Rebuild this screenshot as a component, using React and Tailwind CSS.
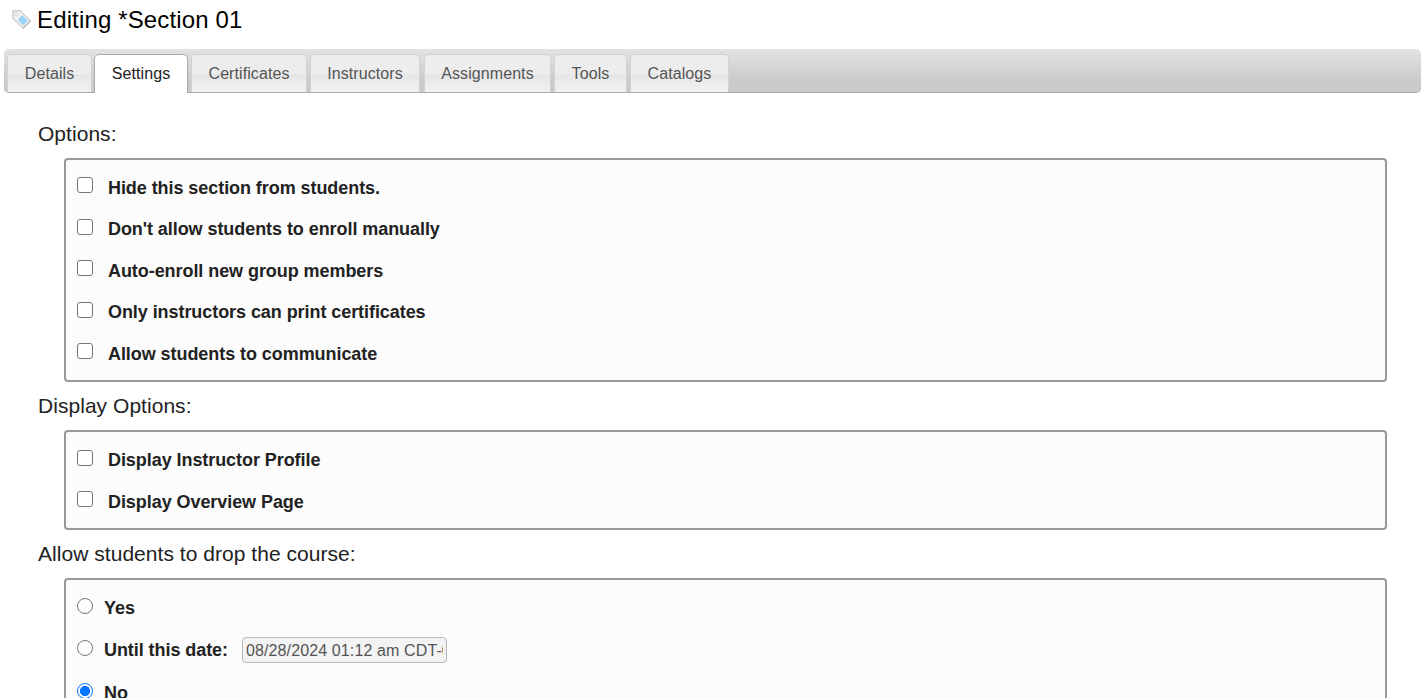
import React, { useState } from "react";

const tabs = [
  { label: "Details", box: "w-[85px] mr-[2px]" },
  { label: "Settings", box: "w-[94px] mr-[3px]" },
  { label: "Certificates", box: "w-[116px] mr-[3px]" },
  { label: "Instructors", box: "w-[110px] mr-[4px]" },
  { label: "Assignments", box: "w-[127px] mr-[3px]" },
  { label: "Tools", box: "w-[73px] mr-[3px]" },
  { label: "Catalogs", box: "w-[99px]" },
];

const control =
  "m-0 size-[16px] shrink-0 appearance-none border border-[#767676] bg-white";

function TagIcon() {
  return (
    <svg className="size-5 shrink-0" viewBox="0 0 20 20" fill="none">
      <path
        d="M.8.8h7.2L18.2 10.8 11 18.2.8 8z"
        fill="#f3f3f3"
        stroke="#cfcfcf"
        strokeWidth="1.4"
        strokeLinejoin="round"
      />
      <path d="M18.4 10.8 11.1 18.3" stroke="#bcbcbc" strokeWidth="1.4" />
      <path d="M10 5.2 15.6 10.6 11.3 15.4 5.8 9.8z" fill="#9ad3fb" />
      <circle cx="4.2" cy="4.3" r="1.5" fill="#fff" stroke="#cfcfcf" />
    </svg>
  );
}

function Tab({ label, box, active, onClick }) {
  return (
    <button
      type="button"
      onClick={onClick}
      className={`${box} shrink-0 rounded-t-[5px] border border-b-0 text-center text-[16px] leading-[20px] tracking-[0.08px] ${
        active
          ? "h-[39px] border-[#aaaaaa] bg-white text-[#212121]"
          : "h-[38px] border-[#d3d3d3] bg-linear-to-b from-[#ededed] from-50% via-[#e6e6e6] via-51% to-[#f1f1f1] pt-px text-[#555555]"
      }`}
    >
      {label}
    </button>
  );
}

function Section({ title, spacing, padding, children }) {
  return (
    <section>
      <h2
        className={`${spacing} ml-[38px] text-[21px] leading-[24px] tracking-[0.04px] text-[#222222]`}
      >
        {title}
      </h2>
      <div
        className={`${padding} mt-[12px] mr-[41px] ml-[64px] rounded-[4px] border-2 border-[#999999] bg-[#fcfcfc] px-[11px]`}
      >
        {children}
      </div>
    </section>
  );
}

function CheckRow({ label }) {
  return (
    <label className="flex h-[41.5px] items-center text-[18px] font-bold tracking-[-0.065px] text-[#222222]">
      <input
        type="checkbox"
        className={`${control} relative -top-[2.5px] rounded-[3px] checked:bg-[#0075ff]`}
      />
      <span className="mt-px ml-[15px]">{label}</span>
    </label>
  );
}

function RadioRow({ label, checked, onChange, className = "", children }) {
  return (
    <div
      className={`${className} flex h-[42px] items-center text-[18px] font-bold tracking-[-0.065px] text-[#222222]`}
    >
      <label className="flex items-center">
        <input
          type="radio"
          name="drop"
          checked={checked}
          onChange={onChange}
          className={`${control} relative -top-[2.5px] rounded-full checked:border-[#0075ff] checked:bg-[radial-gradient(circle,#0075ff_4.7px,#ffffff_5.4px)]`}
        />
        <span className="mt-px ml-[11px]">{label}</span>
      </label>
      {children}
    </div>
  );
}

export default function App() {
  const [tab, setTab] = useState("Settings");
  const [drop, setDrop] = useState("no");
  return (
    <div className="h-[698px] overflow-hidden bg-white font-['Liberation_Sans',Arial,sans-serif]">
      <header className="flex h-[49px] items-start pt-[6px] pl-[12px]">
        <div className="pt-[4px]">
          <TagIcon />
        </div>
        <h1 className="ml-[5px] text-[24px] leading-[28px] tracking-[0.14px] text-black">
          Editing *Section 01
        </h1>
      </header>
      <nav className="mr-[7px] ml-[4px] flex h-[44px] items-start rounded-[5px] border-b border-[#aaaaaa] bg-linear-to-b from-[#e3e3e3] to-[#cacaca] to-75% pt-[5px] pl-[3px]">
        {tabs.map((t) => (
          <Tab
            key={t.label}
            {...t}
            active={tab === t.label}
            onClick={() => setTab(t.label)}
          />
        ))}
      </nav>
      <main>
        <Section title="Options:" spacing="pt-[29px]" padding="pt-[7px] pb-[5px]">
          <CheckRow label="Hide this section from students." />
          <CheckRow label="Don't allow students to enroll manually" />
          <CheckRow label="Auto-enroll new group members" />
          <CheckRow label="Only instructors can print certificates" />
          <CheckRow label="Allow students to communicate" />
        </Section>
        <Section
          title="Display Options:"
          spacing="pt-[12.5px]"
          padding="pt-[7.5px] pb-[5.5px]"
        >
          <CheckRow label="Display Instructor Profile" />
          <CheckRow label="Display Overview Page" />
        </Section>
        <Section
          title="Allow students to drop the course:"
          spacing="pt-[12px]"
          padding="pt-[7px] pb-[5px]"
        >
          <RadioRow
            label="Yes"
            checked={drop === "yes"}
            onChange={() => setDrop("yes")}
          />
          <RadioRow
            label="Until this date:"
            checked={drop === "date"}
            onChange={() => setDrop("date")}
          >
            <input
              type="text"
              disabled
              defaultValue="08/28/2024 01:12 am CDT-05:00"
              className="ml-[14px] h-[26px] w-[205px] rounded-[4px] border border-[#b8b8b8] bg-[#f3f3f3] px-[3px] pt-[2px] text-[16px] font-normal tracking-[0.12px] text-[#545454]"
            />
          </RadioRow>
          <RadioRow
            label="No"
            className="mt-px"
            checked={drop === "no"}
            onChange={() => setDrop("no")}
          />
        </Section>
      </main>
    </div>
  );
}
